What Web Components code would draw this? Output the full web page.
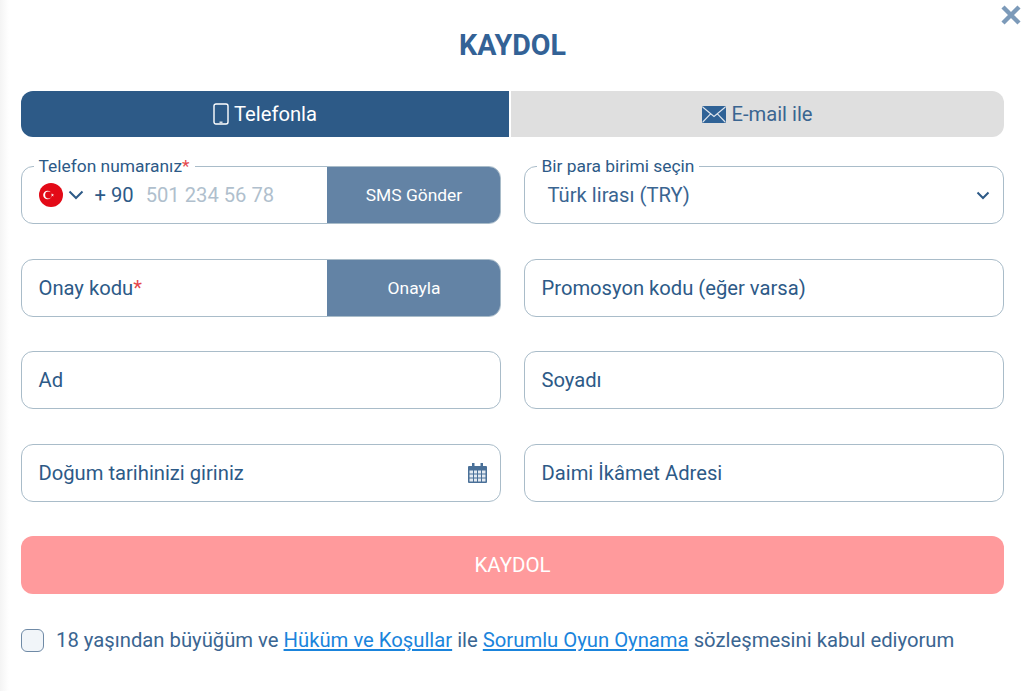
<!DOCTYPE html>
<html lang="tr">
<head>
<meta charset="utf-8">
<title>Kaydol</title>
<style>
  html, body { margin: 0; height: 100%; background: #fff; }
  body { font-family: Roboto, "Liberation Sans", sans-serif; color: #2d5a87; overflow: hidden; }
</style>
</head>
<body>
<signup-dialog>
  <tab-switch slot="tabs"></tab-switch>

  <form-field slot="fields" label="Telefon numaranız" required floating action="SMS Gönder">
    <phone-value></phone-value>
  </form-field>
  <form-field slot="fields" label="Bir para birimi seçin" floating icon="chevron">
    <span style="padding-left:6px;color:#3a6591">Türk lirası (TRY)</span>
  </form-field>

  <form-field slot="fields" placeholder="Onay kodu" required action="Onayla"></form-field>
  <form-field slot="fields" placeholder="Promosyon kodu (eğer varsa)"></form-field>

  <form-field slot="fields" placeholder="Ad"></form-field>
  <form-field slot="fields" placeholder="Soyadı"></form-field>

  <form-field slot="fields" placeholder="Doğum tarihinizi giriniz" icon="calendar"></form-field>
  <form-field slot="fields" placeholder="Daimi İkâmet Adresi"></form-field>

  <terms-check slot="terms"></terms-check>
</signup-dialog>

<script>
class SignupDialog extends HTMLElement {
  constructor() {
    super();
    this.attachShadow({ mode: "open" });
    this.shadowRoot.innerHTML = `
      <style>
        :host {
          display: block;
          box-sizing: border-box;
          height: 691px;
          padding: 0 20px 0 21px;
          position: relative;
          background: linear-gradient(90deg, #f4f4f4 0, #fff 9px);
        }
        h1 {
          margin: 0;
          padding-top: 28px;
          height: 91px;
          box-sizing: border-box;
          text-align: center;
          font-size: 28.6px;
          line-height: 34px;
          font-weight: 700;
          color: #336296;
        }
        .close {
          position: absolute;
          top: 4px;
          right: 2px;
          width: 22px;
          height: 22px;
        }
        .fields {
          display: grid;
          grid-template-columns: 480px 480px;
          column-gap: 23px;
          row-gap: 34.7px;
          margin-top: 29px;
        }
        .submit {
          display: flex;
          align-items: center;
          justify-content: center;
          height: 58px;
          margin-top: 34px;
          border-radius: 12px;
          background: #ff9a9c;
          color: #fff;
          font-size: 20.5px;
        }
        .terms { margin-top: 35px; }
      </style>
      <svg class="close" viewBox="0 0 22 22" aria-hidden="true">
        <path d="M3 3 19 19M19 3 3 19" stroke="#7c9ab9" stroke-width="4.4" fill="none"/>
      </svg>
      <h1>KAYDOL</h1>
      <slot name="tabs"></slot>
      <div class="fields"><slot name="fields"></slot></div>
      <div class="submit">KAYDOL</div>
      <div class="terms"><slot name="terms"></slot></div>
    `;
  }
}

class TabSwitch extends HTMLElement {
  constructor() {
    super();
    this.attachShadow({ mode: "open" });
    this.shadowRoot.innerHTML = `
      <style>
        :host { display: flex; gap: 2px; height: 46px; font-size: 20.2px; }
        .tab {
          display: flex;
          align-items: center;
          justify-content: center;
          gap: 5px;
        }
        .on {
          width: 488px;
          background: #2d5a87;
          color: #fff;
          border-radius: 12px 0 0 12px;
        }
        .off {
          flex: 1;
          background: #dfdfdf;
          color: #3a6591;
          border-radius: 0 12px 12px 0;
        }
      </style>
      <div class="tab on">
        <svg width="16" height="22" viewBox="0 0 16 22" aria-hidden="true">
          <rect x="1" y="1" width="14" height="20" rx="2" fill="none" stroke="#fff" stroke-width="1.4"/>
          <path d="M6.5 19.2h3" stroke="#fff" stroke-width="1.2"/>
        </svg>
        <span>Telefonla</span>
      </div>
      <div class="tab off">
        <svg width="24" height="17" viewBox="0 0 24 17" aria-hidden="true">
          <rect width="24" height="17" rx="1.5" fill="#2f6296"/>
          <path d="M.6 1 12 10.5 23.4 1M.8 16 8.6 7.8M23.2 16 15.4 7.8" fill="none" stroke="#dfe6ee" stroke-width="1.1"/>
        </svg>
        <span>E-mail ile</span>
      </div>
    `;
  }
}

class FormField extends HTMLElement {
  constructor() {
    super();
    this.attachShadow({ mode: "open" });
  }

  connectedCallback() {
    const label = this.getAttribute("label");
    const placeholder = this.getAttribute("placeholder");
    const star = this.hasAttribute("required") ? `<i>*</i>` : "";
    const action = this.getAttribute("action");
    const icon = this.getAttribute("icon");
    const icons = {
      chevron: `<svg width="14" height="9" viewBox="0 0 14 9"><path d="M1.5 1.5 7 7l5.5-5.5" fill="none" stroke="#2d5a87" stroke-width="2"/></svg>`,
      calendar: `<svg width="19" height="20" viewBox="0 0 19 20">
        <path fill="#4a7098" d="M1 3h17a1 1 0 0 1 1 1v15a1 1 0 0 1-1 1H1a1 1 0 0 1-1-1V4a1 1 0 0 1 1-1z"/>
        <path fill="#4a7098" d="M4 0h2.500v5H4zM12.500 0H15v5h-2.500z"/>
        <path fill="#e4eaf1" d="M1.500 7.500h3.500v3H1.500zM6 7.500h3v3H6zM10 7.500h3v3h-3zM14 7.500h3.500v3H14zM1.500 11.500h3.500v3H1.500zM6 11.500h3v3H6zM10 11.500h3v3h-3zM14 11.500h3.500v3H14zM1.500 15.500h3.500v3H1.500zM6 15.500h3v3H6zM10 15.500h3v3h-3zM14 15.500h3.500v3H14z"/>
      </svg>`
    };
    this.shadowRoot.innerHTML = `
      <style>
        :host {
          display: block;
          position: relative;
          box-sizing: border-box;
          height: 58px;
          font-size: 20.2px;
          color: #2d5a87;
        }
        .box {
          display: flex;
          align-items: stretch;
          box-sizing: border-box;
          height: 100%;
          border: 1px solid #a9bcc9;
          border-radius: 12px;
          background: #fff;
          overflow: hidden;
        }
        .value {
          flex: 1;
          display: flex;
          align-items: center;
          padding: 0 16.5px;
          min-width: 0;
        }
        i { font-style: normal; color: #e5484d; }
        .legend {
          position: absolute;
          left: 12.5px;
          top: -10px;
          padding: 0 5px;
          background: #fff;
          font-size: 17.4px;
          line-height: 20px;
          white-space: nowrap;
        }
        .icon {
          display: flex;
          align-items: center;
          padding-right: 13px;
        }
        .action {
          display: flex;
          align-items: center;
          justify-content: center;
          width: 174px;
          background: #6383a5;
          color: #fff;
          font-size: 17.4px;
          margin: -1px -1px -1px 0;
        }
      </style>
      <div class="box">
        <div class="value">${placeholder ? `<span>${placeholder}${star}</span>` : `<slot></slot>`}</div>
        ${icon ? `<div class="icon">${icons[icon]}</div>` : ""}
        ${action ? `<div class="action">${action}</div>` : ""}
      </div>
      ${label ? `<div class="legend">${label}${star}</div>` : ""}
    `;
  }
}

class PhoneValue extends HTMLElement {
  constructor() {
    super();
    this.attachShadow({ mode: "open" });
    this.shadowRoot.innerHTML = `
      <style>
        :host { display: flex; align-items: center; font-size: 20.2px; white-space: nowrap; }
        .chev { margin: 0 11px 0 5px; }
        .num { color: #b0bfcd; margin-left: 12px; }
      </style>
      <svg width="24" height="24" viewBox="0 0 24 24" aria-hidden="true">
        <circle cx="12" cy="12" r="12" fill="#e30a17"/>
        <circle cx="8.500" cy="12" r="4.300" fill="#fff"/>
        <circle cx="9.500" cy="12" r="3.400" fill="#e30a17"/>
        <path d="m13.500 10.500.4 1.100 1.200 0-1 .7.400 1.200-1-.7-1 .7.400-1.200-1-.7 1.200 0z" fill="#fff"/>
      </svg>
      <svg class="chev" width="16" height="10" viewBox="0 0 16 10" aria-hidden="true">
        <path d="M1.500 1.500 8 8l6.500-6.500" fill="none" stroke="#2d5a87" stroke-width="2"/>
      </svg>
      <span>+ 90</span>
      <span class="num">501 234 56 78</span>
    `;
  }
}

class TermsCheck extends HTMLElement {
  constructor() {
    super();
    this.attachShadow({ mode: "open" });
    this.shadowRoot.innerHTML = `
      <style>
        :host {
          display: flex;
          align-items: center;
          gap: 12px;
          font-size: 20.25px;
          line-height: 22px;
          color: #3a6591;
          white-space: nowrap;
        }
        .box {
          width: 23px;
          height: 23px;
          box-sizing: border-box;
          border: 1.5px solid #6f8aa6;
          border-radius: 6px;
          background: #f1f5f9;
        }
        .txt { margin-top: -1px; }
        a { color: #1a84dc; text-decoration: underline; }
      </style>
      <span class="box"></span>
      <span class="txt">18 yaşından büyüğüm ve <a>Hüküm ve Koşullar</a> ile <a>Sorumlu Oyun Oynama</a> sözleşmesini kabul ediyorum</span>
    `;
  }
}

customElements.define("signup-dialog", SignupDialog);
customElements.define("tab-switch", TabSwitch);
customElements.define("form-field", FormField);
customElements.define("phone-value", PhoneValue);
customElements.define("terms-check", TermsCheck);
</script>
</body>
</html>
